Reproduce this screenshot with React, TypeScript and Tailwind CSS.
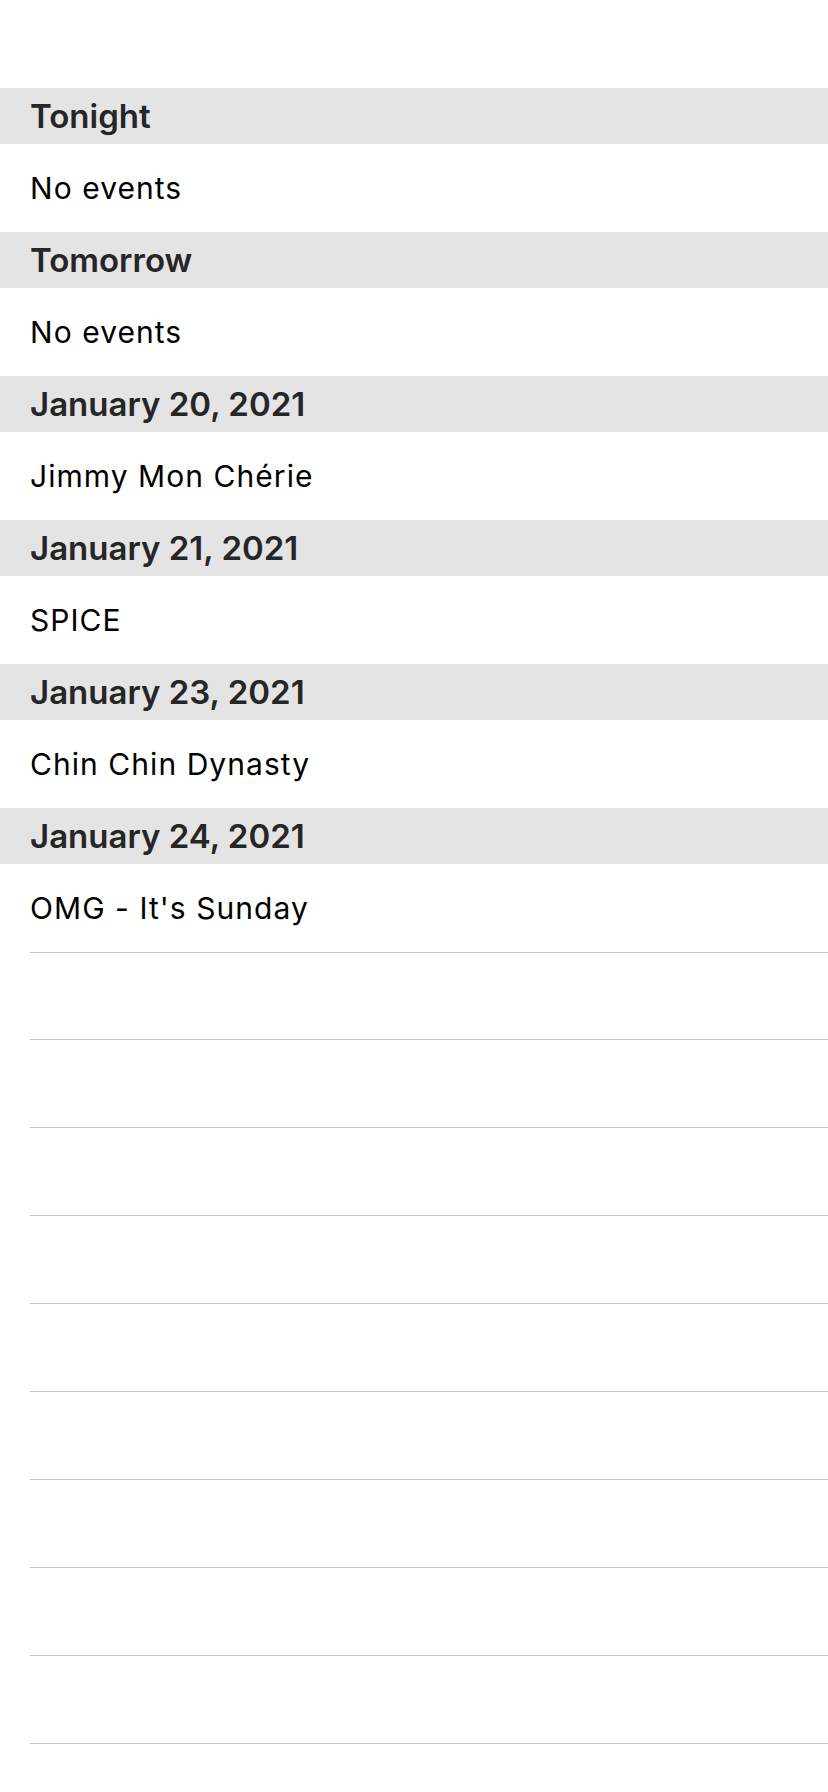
import React from "react";

const sections = [
  { title: "Tonight", item: "No events" },
  { title: "Tomorrow", item: "No events" },
  { title: "January 20, 2021", item: "Jimmy Mon Chérie" },
  { title: "January 21, 2021", item: "SPICE" },
  { title: "January 23, 2021", item: "Chin Chin Dynasty" },
  { title: "January 24, 2021", item: "OMG - It's Sunday" },
];

export default function App() {
  return (
    <div
      className="w-[828px] h-[1792px] overflow-hidden bg-white flex flex-col"
      style={{ fontFamily: "Inter, 'Noto Sans', sans-serif" }}
    >
      <div className="h-[88px] shrink-0" />
      {sections.map((s, i) => (
        <div key={i} className="flex flex-col shrink-0">
          <div className="h-[56px] bg-[#e4e4e4] flex items-center pl-[30px] text-[33px] font-semibold text-[#262626] leading-none">
            {s.title}
          </div>
          <div className="h-[88px] flex items-center pl-[30px] text-[30px] tracking-[0.035em] text-black leading-none">
            {s.item}
          </div>
        </div>
      ))}
      <div className="ml-[30px] border-t border-[#c8c8c8] shrink-0" />
      {Array.from({ length: 10 }).map((_, i) => (
        <div key={i} className="ml-[30px] h-[88px] shrink-0 border-b border-[#c8c8c8] box-border" style={{ marginTop: i === 0 ? -1 : 0 }} />
      ))}
    </div>
  );
}
